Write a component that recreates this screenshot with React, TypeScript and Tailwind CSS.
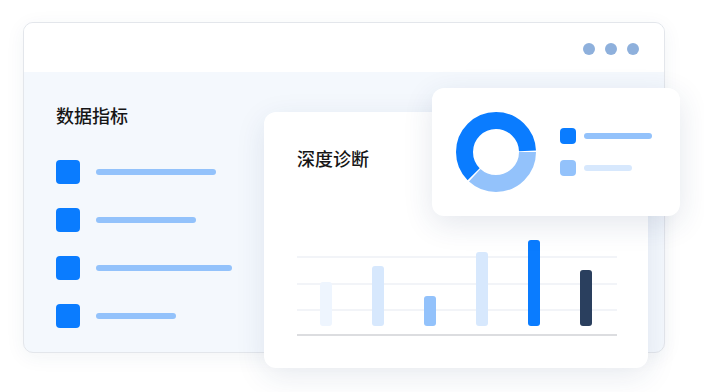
import React from 'react';

const metricRows = [{ width: 120 }, { width: 100 }, { width: 136 }, { width: 80 }];

const bars = [
  { top: 'mt-[42px]', color: 'bg-[#eef5fe]' },
  { top: 'mt-[26px]', color: 'bg-[#d7e8fd]' },
  { top: 'mt-[56px]', color: 'bg-[#93c2fb]' },
  { top: 'mt-[12px]', color: 'bg-[#d7e8fd]' },
  { top: 'mt-[0px]', color: 'bg-[#0a7cff]' },
  { top: 'mt-[30px]', color: 'bg-[#2a3f5e]' },
];

const Donut: React.FC = () => {
  // ring: r = 31.5, stroke 17 -> outer 40, inner 23
  const r = 31.5;
  const c = 2 * Math.PI * r;
  const light = (135 / 360) * c;
  const gap = 1.5;
  return (
    <svg width="80" height="80" viewBox="0 0 80 80">
      <circle
        cx="40"
        cy="40"
        r={r}
        fill="none"
        stroke="#93c2fb"
        strokeWidth="17"
        strokeDasharray={`${light - gap} ${c}`}
      />
      <circle
        cx="40"
        cy="40"
        r={r}
        fill="none"
        stroke="#0a7cff"
        strokeWidth="17"
        strokeDasharray={`${c - light - gap} ${c}`}
        strokeDashoffset={-light}
      />
    </svg>
  );
};

const App: React.FC = () => {
  return (
    <div
      className="relative w-[704px] h-[392px] bg-white overflow-hidden"
      style={{ fontFamily: '"Noto Sans CJK SC", "Noto Sans", sans-serif' }}
    >
      {/* main window */}
      <div className="ml-[23px] mt-[22px] w-[642px] h-[331px] rounded-[10px] border border-[#e3e6eb] bg-[#f4f8fd] overflow-hidden shadow-[0_4px_20px_rgba(30,60,110,0.06)]">
        <div className="h-[49px] bg-white flex items-center justify-end gap-[10px] pr-[25px] pt-[2px]">
          <span className="w-[12px] h-[12px] rounded-full bg-[#8eb0dc]" />
          <span className="w-[12px] h-[12px] rounded-full bg-[#8eb0dc]" />
          <span className="w-[12px] h-[12px] rounded-full bg-[#8eb0dc]" />
        </div>
        <div className="pl-[32px] pt-[31px]">
          <h2 className="text-[18px] leading-[24px] font-medium text-[#161616]">数据指标</h2>
          <div className="mt-[33px] flex flex-col gap-[24px]">
            {metricRows.map((row, i) => (
              <div key={i} className="flex items-center gap-[16px]">
                <span className="w-[24px] h-[24px] rounded-[4px] bg-[#0a7cff]" />
                <span className="h-[6px] rounded-full bg-[#93c2fb]" style={{ width: row.width }} />
              </div>
            ))}
          </div>
        </div>
      </div>

      {/* diagnosis card */}
      <div className="absolute left-[264px] top-[112px] w-[384px] h-[256px] rounded-[12px] bg-white shadow-[0_8px_30px_rgba(30,60,110,0.10)] px-[33px] pt-[34px]">
        <h2 className="text-[18px] leading-[24px] font-medium text-[#161616]">深度诊断</h2>
        <div className="relative mt-[70px] w-[320px] h-[100px]">
          <div className="absolute left-0 right-0 top-[16px] h-[2px] bg-[#f2f4f8]" />
          <div className="absolute left-0 right-0 top-[43px] h-[2px] bg-[#f2f4f8]" />
          <div className="absolute left-0 right-0 top-[69px] h-[2px] bg-[#f2f4f8]" />
          <div className="relative pl-[23px] flex gap-[40px]">
            {bars.map((bar, i) => (
              <div key={i} className="w-[12px] h-[86px] flex flex-col">
                <div className={`${bar.top} flex-1 rounded-[3px] ${bar.color}`} />
              </div>
            ))}
          </div>
          <div className="absolute left-0 right-0 top-[94px] h-[2px] bg-[#dcdde0]" />
        </div>
      </div>

      {/* donut card */}
      <div className="absolute left-[432px] top-[88px] w-[248px] h-[128px] rounded-[12px] bg-white shadow-[0_8px_30px_rgba(30,60,110,0.12)] flex items-start pl-[24px] pt-[24px]">
        <Donut />
        <div className="ml-[24px] mt-[16px] flex flex-col gap-[16px]">
          <div className="flex items-center gap-[8px]">
            <span className="w-[16px] h-[16px] rounded-[4px] bg-[#0a7cff]" />
            <span className="w-[68px] h-[6px] rounded-full bg-[#93c2fb]" />
          </div>
          <div className="flex items-center gap-[8px]">
            <span className="w-[16px] h-[16px] rounded-[4px] bg-[#93c2fb]" />
            <span className="w-[48px] h-[6px] rounded-full bg-[#d7e8fd]" />
          </div>
        </div>
      </div>
    </div>
  );
};

export default App;
